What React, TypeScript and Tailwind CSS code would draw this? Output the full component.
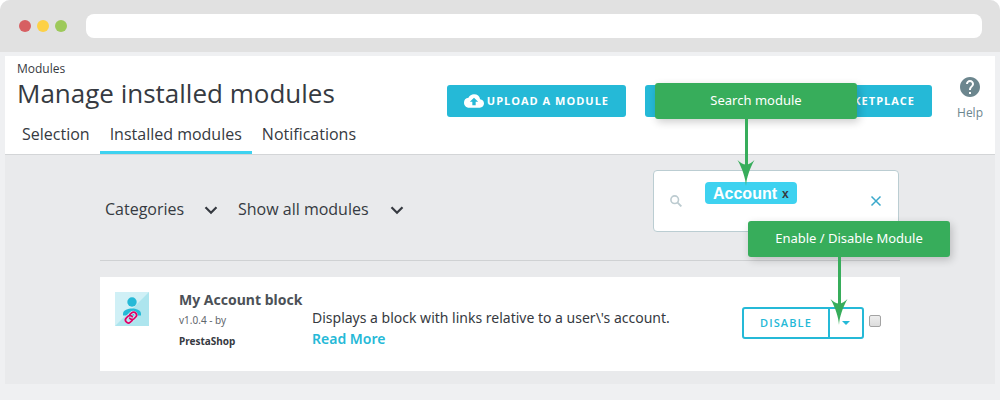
import type { ReactNode } from "react";

function CloudUploadIcon() {
  return (
    <svg viewBox="0 4 24 16" className="h-[14px] w-5 shrink-0" aria-hidden="true">
      <path
        fill="#fff"
        d="M19.35 10.04A7.49 7.49 0 0 0 12 4C9.11 4 6.6 5.64 5.35 8.04A5.994 5.994 0 0 0 0 14c0 3.31 2.69 6 6 6h13c2.76 0 5-2.24 5-5 0-2.64-2.05-4.78-4.65-4.96zM14 13v4h-4v-4H7l5-5 5 5h-3z"
      />
    </svg>
  );
}

function KeyIcon() {
  return (
    <svg viewBox="0 0 24 24" className="size-5 shrink-0" aria-hidden="true">
      <path
        fill="#fff"
        d="M12.65 10A5.99 5.99 0 0 0 7 6c-3.31 0-6 2.69-6 6s2.69 6 6 6a5.99 5.99 0 0 0 5.65-4H17v4h4v-4h2v-4H12.65zM7 14c-1.1 0-2-.9-2-2s.9-2 2-2 2 .9 2 2-.9 2-2 2z"
      />
    </svg>
  );
}

function HelpIcon() {
  return (
    <svg viewBox="2 2 20 20" className="size-5" aria-hidden="true">
      <path
        fill="#6c868e"
        d="M12 2C6.48 2 2 6.48 2 12s4.48 10 10 10 10-4.48 10-10S17.52 2 12 2zm1 17h-2v-2h2v2zm2.07-7.75-.9.92C13.45 12.9 13 13.5 13 15h-2v-.5c0-1.1.45-2.1 1.17-2.83l1.24-1.26c.37-.36.59-.86.59-1.41 0-1.1-.9-2-2-2s-2 .9-2 2H8c0-2.21 1.79-4 4-4s4 1.79 4 4c0 .88-.36 1.68-.93 2.25z"
      />
    </svg>
  );
}

function SearchIcon() {
  return (
    <svg viewBox="0 0 12 12" className="size-3 shrink-0" fill="none" stroke="#bccbd0" aria-hidden="true">
      <circle cx="4.7" cy="4.7" r="3.8" strokeWidth="1.6" />
      <path d="M7.6 7.6 11.4 11.4" strokeWidth="1.9" />
    </svg>
  );
}

function AccountBlockIcon() {
  return (
    <svg viewBox="0 0 34 34" className="size-[34px] shrink-0" aria-hidden="true">
      <path fill="#d0f0f6" d="M0 0h34v34H0z" />
      <path fill="#ade5ee" d="M34 0v34H0z" />
      <circle cx="17" cy="10" r="4.7" fill="#25b9d7" />
      <path fill="#25b9d7" d="M8 23.5v-1.8c0-3.6 5.2-5.2 9-5.2s9 1.6 9 5.2v1.8z" />
      <g fill="none" stroke="#c4ebf3" strokeWidth="3.4" transform="rotate(-43 16 25.5)">
        <rect x="10" y="22.6" width="12" height="5.8" rx="2.9" />
      </g>
      <g fill="none" stroke="#df0067" strokeWidth="1.7" strokeLinecap="round" transform="rotate(-43 16 25.5)">
        <path d="M15 28.4h-2.6a2.9 2.9 0 0 1 0-5.8h2.4a2.9 2.9 0 0 1 2.7 3.2" />
        <path d="M17 22.6h2.6a2.9 2.9 0 0 1 0 5.8h-2.4a2.9 2.9 0 0 1-2.7-3.2" />
      </g>
    </svg>
  );
}

function Arrow({ stem }: { stem: string }) {
  return (
    <div className="ml-[82px] flex w-[18px] flex-col items-center">
      <div className={`w-[3px] bg-[#37ad5b] ${stem}`} />
      <svg viewBox="0 0 18 26" className="-mt-2 h-[26px] w-[18px]" fill="#37ad5b" aria-hidden="true">
        <path d="M9 26C8.5 18 5.5 9 .5 0 3 2.5 6 4.5 9 4.5S15 2.5 17.5 0C12.5 9 9.5 18 9 26z" />
      </svg>
    </div>
  );
}

function Callout({ children }: { children: ReactNode }) {
  return (
    <p className="flex h-9 items-center justify-center rounded-[3px] bg-[#37ad5b] pb-px font-['Noto_Sans',sans-serif] text-[13px] text-white shadow-[2px_3px_8px_rgba(0,0,0,0.2)]">
      {children}
    </p>
  );
}

function FilterSelect({ label, text, width }: { label: string; text: string; width: string }) {
  return (
    <div className={`relative flex items-center ${width}`}>
      <select
        aria-label={label}
        className="w-full cursor-pointer appearance-none bg-transparent text-base leading-6 text-[#363a41] outline-none"
      >
        <option>{text}</option>
      </select>
      <svg
        viewBox="0 0 14 9"
        className="pointer-events-none absolute top-[9px] right-0 h-[9px] w-[14px]"
        fill="none"
        stroke="#363a41"
        strokeWidth="2.2"
        aria-hidden="true"
      >
        <path d="M1.5 1.2 7 6.8l5.5-5.6" />
      </svg>
    </div>
  );
}

function Tabs() {
  return (
    <nav className="flex text-base leading-6">
      <a href="#selection" className="px-[10px] pb-2">
        Selection
      </a>
      <a href="#installed" aria-current="page" className="border-b-3 border-[#3ed2f0] px-[10px] pb-[5px]">
        Installed modules
      </a>
      <a href="#notifications" className="px-[10px] pb-2">
        Notifications
      </a>
    </nav>
  );
}

function SearchBox() {
  return (
    <div className="relative flex h-[62px] w-[246px] items-center rounded-[4px] border border-[#bbcdd2] bg-white px-4">
      <label htmlFor="module-search" aria-label="Search modules">
        <SearchIcon />
      </label>
      <span className="mb-4 ml-[23px] flex h-[22px] shrink-0 items-center gap-[5px] rounded-[4px] bg-[#3ed2f0] px-2 pt-0.5 font-['Liberation_Sans',sans-serif] text-base font-bold text-white">
        Account
        <button type="button" aria-label="Remove Account" className="text-xs text-[#363a41]">
          x
        </button>
      </span>
      <input id="module-search" type="text" className="min-w-0 flex-1 bg-transparent text-sm outline-none" />
      <button type="button" aria-label="Clear search">
        <svg viewBox="0 0 12 12" className="size-3" stroke="#3ba9cc" strokeWidth="1.5" aria-hidden="true">
          <path d="m1.5 1.5 9 9m0-9-9 9" />
        </svg>
      </button>

      <div className="absolute bottom-[45px] left-px z-10 w-[202px]">
        <Callout>Search module</Callout>
        <Arrow stem="h-[49px]" />
      </div>
    </div>
  );
}

function ModuleCard() {
  return (
    <article className="flex bg-white px-[15px] pt-[15px] pb-[19px] font-['Noto_Sans','Open_Sans',sans-serif]">
      <AccountBlockIcon />
      <div className="ml-[30px] w-[133px] shrink-0">
        <h2 className="text-sm leading-4 font-bold whitespace-nowrap text-[#4c5157]">My Account block</h2>
        <p className="mt-0.5 text-[10px] leading-[21px] text-[#5f666c]">
          v1.0.4 - by
          <br />
          <b className="font-bold text-[#363a41]">PrestaShop</b>
        </p>
      </div>
      <p className="mt-[15px] flex-1 text-sm leading-[21px] text-[#363a41]">
        Displays a block with links relative to a user\'s account.
        <br />
        <a href="#read-more" className="font-semibold text-[#25b9d7]">
          Read More
        </a>
      </p>
      <div className="relative mt-[15px] flex h-8 rounded-[3px] border-2 border-[#25b9d7] font-['Open_Sans',sans-serif] text-[#25b9d7]">
        <button type="button" className="w-[84px] text-[11px] font-semibold tracking-widest">
          DISABLE
        </button>
        <button
          type="button"
          aria-label="More actions"
          className="flex w-[34px] items-center justify-center border-l-2 border-[#25b9d7]"
        >
          <svg viewBox="0 0 8 4" className="h-1 w-2" fill="currentColor" aria-hidden="true">
            <path d="M0 0h8L4 4z" />
          </svg>
        </button>
        <div className="absolute right-[-88px] bottom-3 z-20 w-[202px]">
          <Callout>Enable / Disable Module</Callout>
          <Arrow stem="h-[50px]" />
        </div>
      </div>
      <input
        type="checkbox"
        aria-label="Select My Account block"
        className="mt-[23px] mr-1 ml-[5px] size-3 appearance-none rounded-[2px] border border-[#a3a3a3] bg-linear-to-b from-[#eeeeee] to-[#dcdcdc]"
      />
    </article>
  );
}

export default function App() {
  return (
    <div className="bg-white font-['Open_Sans',sans-serif] text-[#363a41]">
      <div className="min-h-screen overflow-hidden rounded-t-[10px] bg-[#eff0f2]">
        <div className="flex h-[52px] items-center gap-[6px] bg-[#e1e1e1] pr-[18px] pl-[19px]">
          <span className="size-3 rounded-full bg-[#d75f62]" />
          <span className="size-3 rounded-full bg-[#fdd147]" />
          <span className="size-3 rounded-full bg-[#9dc95a]" />
          <input
            type="text"
            aria-label="Address"
            className="ml-[13px] h-6 min-w-0 flex-1 rounded-[8px] bg-white px-3 text-sm outline-none"
          />
        </div>

        <main className="mx-[5px] mt-1 bg-[#e9eaec]">
          <header className="flex border-b border-[#d3d5d7] bg-white pl-[7px]">
            <div className="flex-1">
              <p className="pt-1 pl-[5px] text-xs leading-[18px]">Modules</p>
              <h1 className="pl-[5px] text-[26px] leading-[30px] whitespace-nowrap">Manage installed modules</h1>
              <div className="mt-[14px]">
                <Tabs />
              </div>
            </div>
            <div className="mt-[29px] flex gap-[19px] text-[11px] font-bold tracking-[1px] whitespace-nowrap text-white">
              <button type="button" className="flex h-8 items-center gap-[3px] rounded-[3px] bg-[#25b9d7] px-[17px]">
                <CloudUploadIcon />
                UPLOAD A MODULE
              </button>
              <button
                type="button"
                className="flex h-8 w-[287px] items-center justify-end gap-[3px] rounded-[3px] bg-[#25b9d7] px-[17px]"
              >
                <KeyIcon />
                CONNECT TO MARKETPLACE
              </button>
            </div>
            <a
              href="#help"
              className="mt-[21px] mr-3 ml-[25px] flex flex-col items-center gap-[7px] text-xs leading-[18px] text-[#6c868e]"
            >
              <HelpIcon />
              Help
            </a>
          </header>

          <div className="px-[95px] pt-[15px] pb-[13px]">
            <div className="flex items-start justify-between border-b border-[#cfd1d3] pr-px pb-7 pl-[5px]">
              <div className="mt-[27px] flex gap-5">
                <FilterSelect label="Category" text="Categories" width="w-[113px]" />
                <FilterSelect label="Status" text="Show all modules" width="w-[166px]" />
              </div>
              <SearchBox />
            </div>
            <div className="mt-4">
              <ModuleCard />
            </div>
          </div>
        </main>
      </div>
    </div>
  );
}
